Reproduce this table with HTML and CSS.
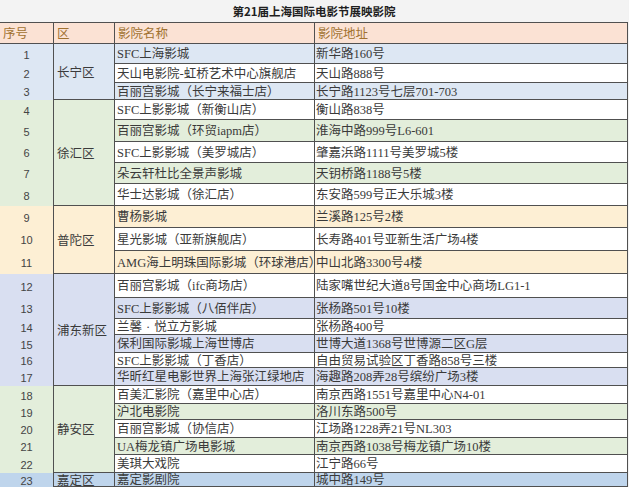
FILE: index.html
```html
<!DOCTYPE html>
<html lang="zh-CN">
<head>
<meta charset="utf-8">
<title>第21届上海国际电影节展映影院</title>
<link rel="stylesheet" href="styles.css">
</head>
<body>
<div class="sheet">
  <div class="title">第21届上海国际电影节展映影院</div>

  <div class="cell head n">序号</div>
  <div class="cell head d">区</div>
  <div class="cell head c">影院名称</div>
  <div class="cell head a">影院地址</div>

  <div class="cell n blue">1</div>
  <div class="cell d blue span3">长宁区</div>
  <div class="cell c blue">SFC上海影城</div>
  <div class="cell a blue">新华路160号</div>

  <div class="cell n blue">2</div>
  <div class="cell c">天山电影院-虹桥艺术中心旗舰店</div>
  <div class="cell a">天山路888号</div>

  <div class="cell n blue">3</div>
  <div class="cell c blue">百丽宫影城（长宁来福士店）</div>
  <div class="cell a blue">长宁路1123号七层701-703</div>

  <div class="cell n green">4</div>
  <div class="cell d green span5">徐汇区</div>
  <div class="cell c">SFC上影影城（新衡山店）</div>
  <div class="cell a">衡山路838号</div>

  <div class="cell n green">5</div>
  <div class="cell c green">百丽宫影城（环贸iapm店）</div>
  <div class="cell a green">淮海中路999号L6-601</div>

  <div class="cell n green">6</div>
  <div class="cell c">SFC上影影城（美罗城店）</div>
  <div class="cell a">肇嘉浜路1111号美罗城5楼</div>

  <div class="cell n green">7</div>
  <div class="cell c green">朵云轩杜比全景声影城</div>
  <div class="cell a green">天钥桥路1188号5楼</div>

  <div class="cell n green">8</div>
  <div class="cell c">华士达影城（徐汇店）</div>
  <div class="cell a">东安路599号正大乐城3楼</div>

  <div class="cell n peach">9</div>
  <div class="cell d peach span3">普陀区</div>
  <div class="cell c peach">曹杨影城</div>
  <div class="cell a peach">兰溪路125号2楼</div>

  <div class="cell n peach">10</div>
  <div class="cell c">星光影城（亚新旗舰店）</div>
  <div class="cell a">长寿路401号亚新生活广场4楼</div>

  <div class="cell n peach">11</div>
  <div class="cell c peach">AMG海上明珠国际影城（环球港店）</div>
  <div class="cell a peach">中山北路3300号4楼</div>

  <div class="cell n lav">12</div>
  <div class="cell d lav span6">浦东新区</div>
  <div class="cell c">百丽宫影城（ifc商场店）</div>
  <div class="cell a">陆家嘴世纪大道8号国金中心商场LG1-1</div>

  <div class="cell n lav">13</div>
  <div class="cell c lav">SFC上影影城（八佰伴店）</div>
  <div class="cell a lav">张杨路501号10楼</div>

  <div class="cell n lav">14</div>
  <div class="cell c">兰馨<span class="dot">·</span>悦立方影城</div>
  <div class="cell a">张杨路400号</div>

  <div class="cell n lav">15</div>
  <div class="cell c lav">保利国际影城上海世博店</div>
  <div class="cell a lav">世博大道1368号世博源二区G层</div>

  <div class="cell n lav">16</div>
  <div class="cell c">SFC上影影城（丁香店）</div>
  <div class="cell a">自由贸易试验区丁香路858号三楼</div>

  <div class="cell n lav">17</div>
  <div class="cell c lav">华昕红星电影世界上海张江绿地店</div>
  <div class="cell a lav">海趣路208弄28号缤纷广场3楼</div>

  <div class="cell n green">18</div>
  <div class="cell d green span5">静安区</div>
  <div class="cell c">百美汇影院（嘉里中心店）</div>
  <div class="cell a">南京西路1551号嘉里中心N4-01</div>

  <div class="cell n green">19</div>
  <div class="cell c green">沪北电影院</div>
  <div class="cell a green">洛川东路500号</div>

  <div class="cell n green">20</div>
  <div class="cell c">百丽宫影城（协信店）</div>
  <div class="cell a">江场路1228弄21号NL303</div>

  <div class="cell n green">21</div>
  <div class="cell c green">UA梅龙镇广场电影城</div>
  <div class="cell a green">南京西路1038号梅龙镇广场10楼</div>

  <div class="cell n green">22</div>
  <div class="cell c">美琪大戏院</div>
  <div class="cell a">江宁路66号</div>

  <div class="cell n blue2">23</div>
  <div class="cell d blue2">嘉定区</div>
  <div class="cell c blue2">嘉定影剧院</div>
  <div class="cell a blue2">城中路149号</div>
</div>
</body>
</html>
```

FILE: styles.css
```css
html, body {
  margin: 0;
  padding: 0;
}

body {
  background: #f2f2f2;
  font-family: "Liberation Serif", "Noto Sans CJK SC", serif;
  font-size: 12.5px;
  color: #3a3a3a;
}

.sheet {
  display: grid;
  width: 628px;
  grid-template-columns: 54px 61px 200px 313px;
  grid-template-rows:
    23px 21px
    20px 19px 17px
    20px 22px 21px 21px 22px
    22px 23px 23px
    24px 21px 16px 18px 15px 18px
    18px 16px 18px 17px 18px
    14px;
}

.title {
  grid-column: 1 / -1;
  box-sizing: border-box;
  border-bottom: 1px solid #505050;
  display: flex;
  align-items: center;
  justify-content: center;
  font-family: "Noto Sans CJK SC", sans-serif;
  font-weight: 700;
  font-size: 11.5px;
  color: #1f1f1f;
  background: #f3f3f3;
}

.cell {
  box-sizing: border-box;
  display: flex;
  align-items: center;
  padding-top: 2px;
  white-space: nowrap;
  line-height: 1;
  background: #ffffff;
  border-right: 1px solid #505050;
}

.n {
  justify-content: center;
  font-family: "Liberation Sans", "Noto Sans CJK SC", sans-serif;
  font-size: 11px;
  color: #444444;
}

.d,
.c,
.a {
  border-bottom: 1px solid #505050;
}

.d {
  padding-left: 3px;
  padding-top: 3px;
  color: #3a3a3a;
}

.c {
  padding-left: 2px;
}

.a {
  padding-left: 1px;
}

.head {
  background: #fbe2d4;
  color: #a0712f;
  border-bottom: 1px solid #505050;
  padding-left: 3px;
  font-size: 12.5px;
  font-family: "Liberation Serif", "Noto Sans CJK SC", serif;
}

.head.n {
  justify-content: flex-start;
  padding-left: 3px;
}

.span3 { grid-row: span 3; }
.span5 { grid-row: span 5; }
.span6 { grid-row: span 6; }

.blue  { background: #dde7f3; }
.green { background: #e3eedb; }
.peach { background: #fdefd4; }
.lav   { background: #d9dff1; }
.blue2 { background: #bfd5ec; }

.dot {
  padding: 0 4px;
}
```
